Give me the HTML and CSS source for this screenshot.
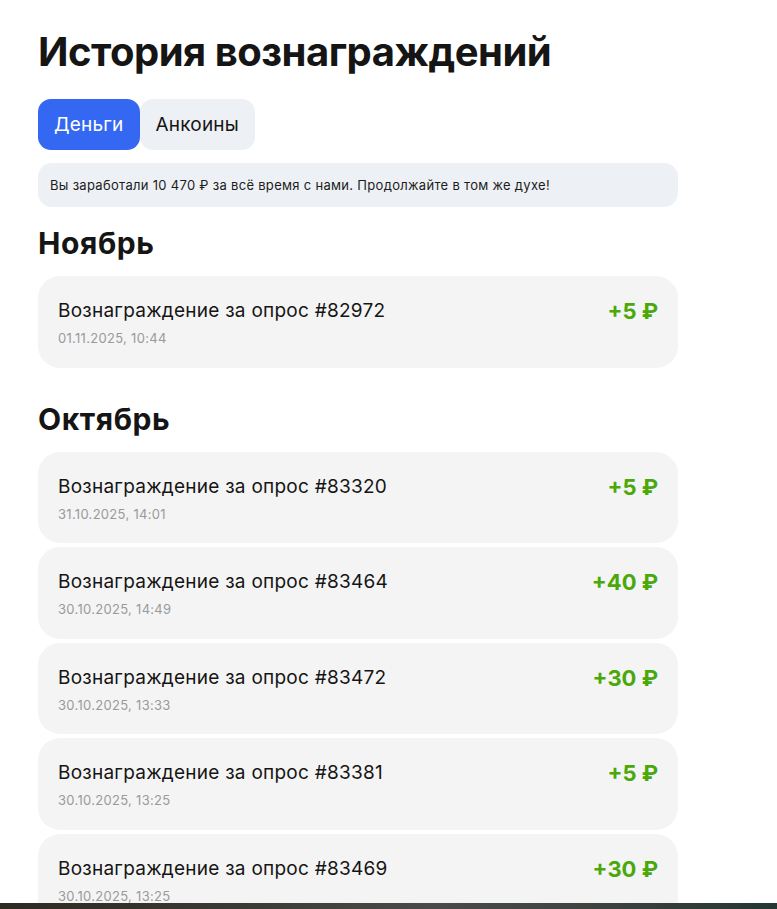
FILE: index.html
```html
<!DOCTYPE html>
<html lang="ru">
<head>
<meta charset="utf-8">
<title>История вознаграждений</title>
<link rel="stylesheet" href="styles.css">
</head>
<body>
<main class="page">
  <h1 class="title">История вознаграждений</h1>
  <div class="tabs">
    <button class="tab tab-active">Деньги</button>
    <button class="tab">Анкоины</button>
  </div>
  <div class="banner">Вы заработали 10 470 ₽ за всё время с нами. Продолжайте в том же духе!</div>

  <section class="month">
    <h2 class="month-title">Ноябрь</h2>
    <div class="list">
      <div class="card">
        <div class="info"><div class="name">Вознаграждение за опрос #82972</div><div class="date">01.11.2025, 10:44</div></div>
        <div class="amount">+5 ₽</div>
      </div>
    </div>
  </section>

  <section class="month month-next">
    <h2 class="month-title">Октябрь</h2>
    <div class="list">
      <div class="card">
        <div class="info"><div class="name">Вознаграждение за опрос #83320</div><div class="date">31.10.2025, 14:01</div></div>
        <div class="amount">+5 ₽</div>
      </div>
      <div class="card">
        <div class="info"><div class="name">Вознаграждение за опрос #83464</div><div class="date">30.10.2025, 14:49</div></div>
        <div class="amount">+40 ₽</div>
      </div>
      <div class="card">
        <div class="info"><div class="name">Вознаграждение за опрос #83472</div><div class="date">30.10.2025, 13:33</div></div>
        <div class="amount">+30 ₽</div>
      </div>
      <div class="card">
        <div class="info"><div class="name">Вознаграждение за опрос #83381</div><div class="date">30.10.2025, 13:25</div></div>
        <div class="amount">+5 ₽</div>
      </div>
      <div class="card">
        <div class="info"><div class="name">Вознаграждение за опрос #83469</div><div class="date">30.10.2025, 13:25</div></div>
        <div class="amount">+30 ₽</div>
      </div>
    </div>
  </section>
</main>
<div class="bottom-strip"></div>
</body>
</html>
```
FILE: styles.css
```css
html, body {
  margin: 0;
  padding: 0;
  background: #ffffff;
}
body {
  font-family: Inter, "Noto Sans", sans-serif;
  color: #151515;
}
.page {
  width: 640px;
  padding: 26px 0 40px 38px;
}
.title {
  margin: 0;
  font-size: 40px;
  line-height: 52px;
  font-weight: 700;
  letter-spacing: -0.5px;
}
.tabs {
  display: flex;
  margin-top: 21px;
}
.tab {
  font-family: inherit;
  font-size: 19px;
  letter-spacing: 0.2px;
  border: none;
  height: 51px;
  padding: 0 16px;
  border-radius: 13px;
  background: #edf1f5;
  color: #151515;
}
.tab-active {
  background: #3468f2;
  color: #ffffff;
}
.banner {
  margin-top: 13px;
  height: 44px;
  display: flex;
  align-items: center;
  padding: 0 12px;
  background: #edf1f5;
  border-radius: 14px;
  font-size: 13px;
  letter-spacing: 0.3px;
  color: #1c1c1c;
}
.month {
  margin-top: 18px;
}
.month-next {
  margin-top: 33px;
}
.month-title {
  margin: 0 0 15px;
  font-size: 30px;
  line-height: 36px;
  font-weight: 700;
  letter-spacing: 0.6px;
}
.list {
  display: flex;
  flex-direction: column;
  gap: 4px;
}
.card {
  display: flex;
  justify-content: space-between;
  align-items: flex-start;
  height: 91.5px;
  box-sizing: border-box;
  padding: 23px 20px 0;
  background: #f4f4f4;
  border-radius: 22px;
}
.info {
  display: flex;
  flex-direction: column;
  gap: 7px;
}
.name {
  font-size: 19px;
  line-height: 24px;
  letter-spacing: 0.25px;
}
.date {
  font-size: 13px;
  line-height: 17px;
  letter-spacing: 0.3px;
  color: #9a9a9a;
}
.amount {
  font-size: 22px;
  line-height: 24px;
  font-weight: 700;
  color: #4aa80a;
}
.bottom-strip {
  position: fixed;
  left: 0;
  right: 0;
  bottom: 0;
  height: 6px;
  background: linear-gradient(90deg, #2d2a20 0%, #3a3a34 30%, #4a4a4a 55%, #3f4441 75%, #243733 100%);
}
```
